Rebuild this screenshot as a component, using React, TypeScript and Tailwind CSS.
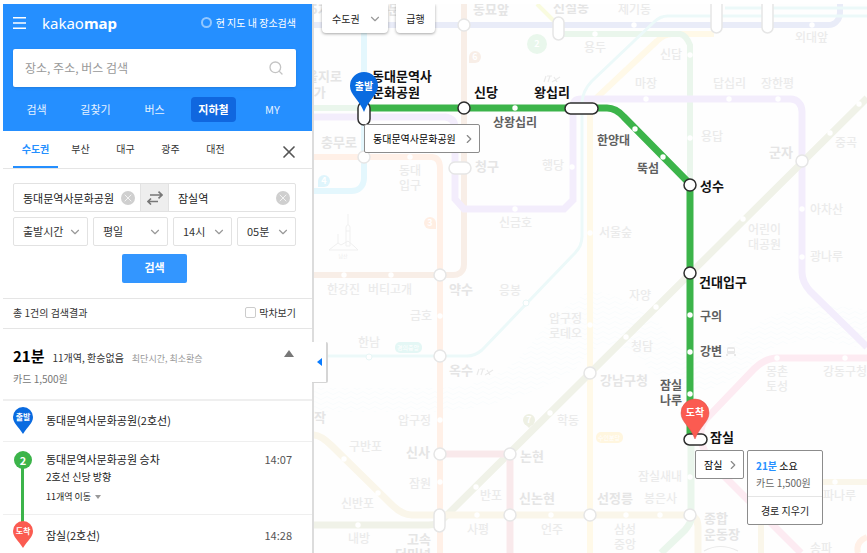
import React, { useState } from 'react';
import { ChevronDown, ChevronRight, Search, X } from 'lucide-react';

type Point = [number, number];

interface StationLabel {
  text: string;
  x: number;
  y: number;
  major?: boolean;
}

const mainTabs = ['검색', '길찾기', '버스', '지하철', 'MY'];
const regions = ['수도권', '부산', '대구', '광주', '대전'];

const timeFilters = [
  { id: 'type', label: '시간 기준', value: '출발시간', className: 'flex-[75]' },
  { id: 'day', label: '요일', value: '평일', className: 'flex-[75]' },
  { id: 'hour', label: '시', value: '14시', className: 'flex-[59]' },
  { id: 'minute', label: '분', value: '05분', className: 'flex-[59]' }
];

// Background lines, drawn in order
const lines = [
  { d: 'M364 4V178Q364 184 360 188Q357 191 351 191H312', color: '#e4f7fd', width: 6 },
  { d: 'M537 4L555 22', color: '#f9fbdf', width: 4 },
  { d: 'M312 25H828Q834 25 837 21Q840 18 840 12V4', color: '#e9ecf8', width: 6 },
  { d: 'M590 553V104L657 41Q664 34 672 34H714', color: '#fff9e8', width: 6 },
  { d: 'M558 34H680Q686 35 690 45V185', color: '#eaf6ec', width: 6 },
  { d: 'M312 108H364', color: '#eaf6ec', width: 6 },
  { d: 'M464 4V264Q464 270 460 273Q457 275 453 275H312', color: '#f8eee7', width: 6 },
  { d: 'M312 157H432Q440 158 440 168V553', color: '#fff0e7', width: 6 },
  { d: 'M312 117H445Q455 118 455 128V199L464 209H564L573 200V107Q573 99 581 99H790Q796 99 799 103Q802 106 802 112V272Q802 282 810 291L867 347', color: '#f3edfc', width: 7 },
  { d: 'M867 16H668Q660 16 654 22L592 81Q582 91 582 104V236Q582 246 575 253L482 350Q475 356 467 356H312', color: '#ecf9f9', width: 3 },
  { d: 'M725 8H867', color: '#ecf9f9', width: 3 },
  { d: 'M867 98L443 519Q439 525 428 525H312', color: '#f0f2e8', width: 7 },
  { d: 'M312 435Q320 434 332 446L391 504Q402 515 412 515H686Q698 515 698 527V553', color: '#faf6ea', width: 7 },
  { d: 'M761 553V482H867', color: '#faf6ea', width: 6 },
  { d: 'M440 454H510V553', color: '#f9e9eb', width: 7 },
  { d: 'M867 358H778Q765 358 754 369L706 419Q700 426 701 437Q702 453 716 468L801 553', color: '#fdebf2', width: 7 },
  { d: 'M691 440V520Q690 524 685 530L661 553', color: '#eaf6ec', width: 7 },
  { d: 'M858 553Q855 542 867 537', color: '#fff0e7', width: 6 }
];

const stops: Point[] = [
  [410, 157], [572, 167], [515, 209], [344, 275], [391, 275], [440, 316], [440, 420], [440, 482],
  [595, 34], [634, 25], [812, 25], [690, 55], [690, 138], [646, 99], [729, 99], [778, 99],
  [830, 133], [859, 104], [743, 219], [802, 209], [802, 257], [656, 307], [626, 337], [590, 233],
  [590, 325], [344, 459], [378, 493], [358, 525], [477, 515], [551, 515], [626, 515], [660, 515],
  [550, 413], [476, 487], [690, 477], [777, 358], [845, 358], [835, 482]
];

const thinStops: Point[] = [[526, 303], [369, 357]];

const transfers: Point[] = [
  [464, 25], [364, 157], [440, 275], [440, 356], [440, 454], [510, 454], [510, 515],
  [590, 515], [590, 373], [690, 515], [802, 161]
];

const labels: StationLabel[] = [
  { text: '5가', x: 310, y: 10, major: true },
  { text: '동대문', x: 364, y: 10, major: true },
  { text: '동묘앞', x: 473, y: 10, major: true },
  { text: '신설동', x: 553, y: 8, major: true },
  { text: '제기동', x: 618, y: 10 },
  { text: '외대앞', x: 795, y: 38 },
  { text: '용두', x: 584, y: 48 },
  { text: '신답', x: 660, y: 55 },
  { text: '마장', x: 635, y: 84 },
  { text: '답십리', x: 713, y: 84 },
  { text: '장한평', x: 761, y: 84 },
  { text: '용답', x: 701, y: 137 },
  { text: '군자', x: 769, y: 153, major: true },
  { text: '중곡', x: 835, y: 143 },
  { text: '을지로', x: 306, y: 77, major: true },
  { text: '4가', x: 306, y: 93, major: true },
  { text: '충무로', x: 321, y: 143, major: true },
  { text: '동대', x: 399, y: 171 },
  { text: '입구', x: 399, y: 186 },
  { text: '청구', x: 475, y: 167, major: true },
  { text: '행당', x: 542, y: 166 },
  { text: '신금호', x: 499, y: 223 },
  { text: '한강진', x: 327, y: 290 },
  { text: '버티고개', x: 368, y: 290 },
  { text: '약수', x: 449, y: 290, major: true },
  { text: '금호', x: 410, y: 316 },
  { text: '한남', x: 358, y: 343 },
  { text: '응봉', x: 499, y: 291 },
  { text: '압구정', x: 549, y: 319 },
  { text: '로데오', x: 549, y: 334 },
  { text: '옥수', x: 449, y: 371, major: true },
  { text: '서울숲', x: 599, y: 233 },
  { text: '어린이', x: 748, y: 230 },
  { text: '대공원', x: 748, y: 245 },
  { text: '아차산', x: 810, y: 210 },
  { text: '광나루', x: 810, y: 257 },
  { text: '자양', x: 629, y: 296 },
  { text: '청담', x: 631, y: 347 },
  { text: '몽촌', x: 766, y: 372 },
  { text: '토성', x: 766, y: 387 },
  { text: '강동구청', x: 823, y: 372 },
  { text: '강남구청', x: 600, y: 381, major: true },
  { text: '동작', x: 302, y: 418, major: true },
  { text: '구반포', x: 349, y: 447 },
  { text: '압구정', x: 398, y: 421 },
  { text: '신사', x: 406, y: 453, major: true },
  { text: '학동', x: 557, y: 421 },
  { text: '논현', x: 520, y: 457, major: true },
  { text: '잠원', x: 409, y: 484 },
  { text: '반포', x: 480, y: 496 },
  { text: '신논현', x: 519, y: 499, major: true },
  { text: '신반포', x: 341, y: 504 },
  { text: '내방', x: 348, y: 539 },
  { text: '고속', x: 407, y: 540, major: true },
  { text: '터미널', x: 395, y: 555, major: true },
  { text: '사평', x: 467, y: 530 },
  { text: '언주', x: 541, y: 530 },
  { text: '잠실새내', x: 638, y: 477 },
  { text: '선정릉', x: 597, y: 499, major: true },
  { text: '봉은사', x: 644, y: 499 },
  { text: '삼성', x: 614, y: 530 },
  { text: '중앙', x: 614, y: 545 },
  { text: '종합', x: 704, y: 519, major: true },
  { text: '운동장', x: 704, y: 535, major: true },
  { text: '송파', x: 810, y: 549 },
  { text: '송파나루', x: 812, y: 496 }
];

const routeStops: Point[] = [[515, 108], [635, 129], [663, 157], [690, 315], [690, 352], [690, 394]];
const routeTransfers: Point[] = [[464, 108], [690, 185], [690, 273]];

const routeLabels: StationLabel[] = [
  { text: '동대문역사', x: 372, y: 77, major: true },
  { text: '문화공원', x: 372, y: 93, major: true },
  { text: '신당', x: 474, y: 93, major: true },
  { text: '왕십리', x: 534, y: 93, major: true },
  { text: '상왕십리', x: 493, y: 123 },
  { text: '한양대', x: 597, y: 141 },
  { text: '뚝섬', x: 637, y: 169 },
  { text: '성수', x: 700, y: 187, major: true },
  { text: '건대입구', x: 699, y: 283, major: true },
  { text: '구의', x: 700, y: 317 },
  { text: '강변', x: 700, y: 352 },
  { text: '잠실', x: 660, y: 386 },
  { text: '나루', x: 660, y: 401 },
  { text: '잠실', x: 710, y: 438, major: true }
];

const lineBadges = [
  { text: '2', x: 537, y: 44, r: 10, color: '#e9f7ec' },
  { text: '6', x: 475, y: 57, r: 6, color: '#f8eee7' },
  { text: '4', x: 324, y: 181, r: 6, color: '#dff5fc' },
  { text: '3', x: 430, y: 223, r: 6, color: '#ffeee3' },
  { text: '7', x: 529, y: 420, r: 6, color: '#eef0e3' }
];

const Pin: React.FC<{ text: string; color: string }> = ({ text, color }) => (
  <svg width="20" height="27" viewBox="0 0 20 27" className="shrink-0">
    <path d="M10 0a10 10 0 0 1 10 10c0 6-5 9-10 17C5 19 0 16 0 10A10 10 0 0 1 10 0z" fill={color} />
    <text x="10" y="13" textAnchor="middle" fontSize="8" fontWeight="700" fill="#fff">{text}</text>
  </svg>
);

const SubwayMap: React.FC = () => (
  <svg className="absolute inset-0 h-full w-full" role="img" aria-label="수도권 노선도">
    <defs>
      <pattern id="waves" width="12" height="5" patternUnits="userSpaceOnUse">
        <path d="M0 3Q3 0 6 3T12 3" fill="none" stroke="#f9fcfd" strokeWidth="1" />
      </pattern>
    </defs>
    <g transform="translate(-314 -4)">
      {/* Han river */}
      <path d="M312 388H440Q500 385 530 345Q560 305 592 290Q640 300 665 330Q690 375 740 335Q790 295 867 310V350Q800 330 760 355Q700 420 650 370Q610 320 575 370Q520 405 440 412H312Z" fill="url(#waves)" />

      {lines.map((line) => (
        <path key={line.d} d={line.d} fill="none" stroke={line.color} strokeWidth={line.width} />
      ))}
      {stops.map(([x, y]) => (
        <circle key={`${x}-${y}`} cx={x} cy={y} r="2.7" fill="#fff" />
      ))}
      {thinStops.map(([x, y]) => (
        <circle key={`${x}-${y}`} cx={x} cy={y} r="3" fill="#fff" stroke="#e8f6f6" />
      ))}
      <g fill="#fff" stroke="#e6e6e6" strokeWidth="1.5">
        {transfers.map(([x, y]) => (
          <circle key={`${x}-${y}`} cx={x} cy={y} r="6" />
        ))}
        <rect x="553" y="17" width="11" height="23" rx="5.5" />
        <rect x="711" y="-5" width="11" height="38" rx="5.5" />
        <rect x="762" y="-5" width="11" height="38" rx="5.5" />
        <rect x="449" y="162" width="22" height="12" rx="6" />
        <rect x="434" y="509" width="11" height="23" rx="5.5" />
      </g>

      {/* Line badges */}
      {lineBadges.map((badge) => (
        <g key={badge.text}>
          <circle cx={badge.x} cy={badge.y} r={badge.r} fill={badge.color} />
          {badge.text === '7' && <path d="M524 423L529 428L534 423Z" fill={badge.color} />}
          {badge.text === '3' && <path d="M430 223H436V229H430Z" fill={badge.color} />}
          {(badge.text === '6' || badge.text === '4') && (
            <rect x={badge.x - 6} y={badge.y} width="6" height="6" fill={badge.color} />
          )}
          <text x={badge.x} y={badge.y + 3} textAnchor="middle" fontSize="9" fontWeight="700" fill="#fff">{badge.text}</text>
        </g>
      ))}
      <rect x="395" y="342" width="27" height="11" rx="5" fill="#e4f7f5" />
      <text x="408" y="350" textAnchor="middle" fontSize="6" fill="#fff">경의중앙</text>
      <rect x="596" y="432" width="27" height="11" rx="5" fill="#fff6df" />
      <text x="609" y="440" textAnchor="middle" fontSize="6" fill="#fff">수인분당</text>

      {/* Namsan tower */}
      <g fill="none" stroke="#f0f0f0">
        <path d="M348 214V224M346 227Q348 222 350 227V231H346ZM346 231V246H350V231M338 234V243" />
        <path d="M329 250Q334 246 338 243L341 245L348 241L355 247L358 250Z" />
      </g>
      <text x="343" y="258" textAnchor="middle" fontSize="5" fill="#ebebeb">남산</text>
      <g fill="none" stroke="#eaeaea" strokeWidth="1.2">
        <path d="M546 76L544 82M547 76H552M550 76L548 82M554 77L557 82M560 77L552 82" />
        <path d="M479 369L477 375M480 369H485M483 369L481 375M487 370L490 375M493 370L485 375" />
        <path d="M704 551Q720 542 738 551" />
      </g>

      <g fontWeight="500">
        {labels.map(({ text, x, y, major }) => (
          <text
            key={`${text}-${x}-${y}`}
            x={x}
            y={y + 4}
            fontSize={major ? 13 : 12}
            fontWeight={major ? 700 : 500}
            fill={major ? '#e5e5e5' : '#ebebeb'}
          >
            {text}
          </text>
        ))}
      </g>

      {/* Bus terminal mark */}
      <g fill="#e9e9e9">
        <rect x="727" y="347" width="8" height="7" rx="1.5" />
        <rect x="726" y="354" width="2" height="2" />
        <rect x="734" y="354" width="2" height="2" />
        <rect x="728" y="349" width="6" height="2" fill="#fff" />
      </g>

      {/* Selected route */}
      <path d="M364 108H607Q616 108 624 117L690 184V440" fill="none" stroke="#3cb44a" strokeWidth="7" />
      {routeStops.map(([x, y]) => (
        <circle key={`${x}-${y}`} cx={x} cy={y} r="2.7" fill="#fff" />
      ))}
      <g fill="#fff" stroke="#2e2e2e" strokeWidth="1.5">
        {routeTransfers.map(([x, y]) => (
          <circle key={`${x}-${y}`} cx={x} cy={y} r="6" />
        ))}
        <rect x="358" y="102" width="12" height="23" rx="6" />
        <rect x="565" y="103" width="33" height="11" rx="5.5" />
        <rect x="684" y="434" width="23" height="11" rx="5.5" />
      </g>
      {routeLabels.map(({ text, x, y, major }) => (
        <text
          key={`${text}-${x}-${y}`}
          x={x}
          y={y + 4}
          fontSize={major ? 13 : 12}
          fontWeight="700"
          fill={major ? '#111' : '#606060'}
        >
          {text}
        </text>
      ))}

      {/* Departure and arrival pins */}
      <path d="M364 72a14 14 0 0 1 14 14c0 9-9 13-14 26c-5-13-14-17-14-26A14 14 0 0 1 364 72z" fill="#0a6be0" />
      <text x="364" y="90" textAnchor="middle" fontSize="10" fontWeight="700" fill="#fff">출발</text>
      <path d="M695 399a14 14 0 0 1 14 14c0 9-9 13-14 26c-5-13-14-17-14-26A14 14 0 0 1 695 399z" fill="#fb5b51" stroke="#d9534a" strokeWidth=".5" />
      <text x="695" y="416" textAnchor="middle" fontSize="10" fontWeight="700" fill="#fff">도착</text>
    </g>
  </svg>
);

const App: React.FC = () => {
  const [activeTab, setActiveTab] = useState('지하철');
  const [region, setRegion] = useState('수도권');

  return (
    <div className="flex h-screen overflow-hidden bg-white pt-1 pl-[3px] font-['Noto_Sans_CJK_KR','Noto_Sans',sans-serif] text-[11px] leading-4 text-[#333]">
      <aside className="relative z-10 flex w-[311px] shrink-0 flex-col border-r-2 border-[#dcdcdc] bg-white">
        {/* Header */}
        <header className="h-[127px] shrink-0 bg-[#258fff] text-white">
          <div className="flex h-[45px] items-center pr-4 pb-2 pl-[10px]">
            <button aria-label="메뉴">
              <svg width="13" height="12" viewBox="0 0 13 12" fill="#fff">
                <path d="M0 0H13V1.5H0ZM0 5.2H13V6.7H0ZM0 10.5H13V12H0Z" />
              </svg>
            </button>
            <h1 className="ml-4 font-['Noto_Sans'] text-[15px] leading-5">
              kakao<span className="font-bold">map</span>
            </h1>
            <button className="ml-auto flex items-center gap-1 text-[10px]">
              <span className="h-[11px] w-[11px] rounded-full border-2 border-[#92c7ff]" />
              현 지도 내 장소검색
            </button>
          </div>
          <div className="mr-4 ml-[10px] flex h-[38px] items-center rounded-xs bg-white px-3 shadow-sm">
            <input
              aria-label="장소, 주소, 버스 검색"
              placeholder="장소, 주소, 버스 검색"
              className="min-w-0 flex-1 text-[12px] text-[#333] outline-none placeholder:text-[#999]"
            />
            <button aria-label="검색">
              <Search className="h-4 w-4 text-[#c4c4c4]" strokeWidth={2} />
            </button>
          </div>
          <nav className="flex px-1 pt-[10px]">
            {mainTabs.map((tab) => (
              <button key={tab} onClick={() => setActiveTab(tab)} className="flex w-[59px] justify-center">
                <span
                  className={`flex h-[25px] w-[45px] items-center justify-center rounded-sm pb-[2px] ${
                    activeTab === tab ? 'bg-[#1067df] font-bold' : 'text-[#e6f2ff]'
                  }`}
                >
                  {tab}
                </span>
              </button>
            ))}
          </nav>
        </header>

        {/* Region tabs */}
        <div className="flex h-[38px] shrink-0 border-b border-[#e5e5e5] pr-[13px] pl-[10px] text-[10px]">
          {regions.map((name) => (
            <button
              key={name}
              onClick={() => setRegion(name)}
              className={`w-[45px] border-b-2 ${
                region === name ? 'border-[#258fff] font-bold text-[#258fff]' : 'border-transparent'
              }`}
            >
              {name}
            </button>
          ))}
          <button aria-label="닫기" className="mt-1 ml-auto">
            <X className="h-5 w-5 text-[#555]" strokeWidth={2} />
          </button>
        </div>

        {/* Search form */}
        <form className="shrink-0 border-b border-[#e5e5e5] pt-[14px] pr-4 pb-[15px] pl-[10px]" onSubmit={(e) => e.preventDefault()}>
          <div className="flex h-[29px] rounded-xs border border-[#e2e2e2]">
            <div className="flex w-[126px] shrink-0 items-center pr-[5px] pl-[9px]">
              <input aria-label="출발역" defaultValue="동대문역사문화공원" className="min-w-0 flex-1 text-[#222] outline-none" />
              <button type="button" aria-label="출발역 지우기" className="flex h-[14px] w-[14px] shrink-0 items-center justify-center rounded-full bg-[#cfcfcf]">
                <X className="h-3 w-3 text-white" strokeWidth={1.5} />
              </button>
            </div>
            <button type="button" aria-label="출발 도착 바꾸기" className="flex w-[29px] shrink-0 items-center justify-center border-x border-[#e2e2e2] bg-[#eee]">
              <svg width="16" height="14" viewBox="0 0 16 14" fill="none" stroke="#777" strokeWidth="1.6">
                <path d="M3 4H15M11.5 0.7L15 4L11.5 7.3M11 10.5H1M4 7.5L1 10.5L4 13.5" />
              </svg>
            </button>
            <div className="flex min-w-0 flex-1 items-center pr-[5px] pl-[9px]">
              <input aria-label="도착역" defaultValue="잠실역" className="min-w-0 flex-1 text-[#222] outline-none" />
              <button type="button" aria-label="도착역 지우기" className="flex h-[14px] w-[14px] shrink-0 items-center justify-center rounded-full bg-[#cfcfcf]">
                <X className="h-3 w-3 text-white" strokeWidth={1.5} />
              </button>
            </div>
          </div>
          <div className="mt-[5px] flex gap-[5px]">
            {timeFilters.map((filter) => (
              <div key={filter.id} className={`relative min-w-0 ${filter.className}`}>
                <select
                  aria-label={filter.label}
                  className="h-[29px] w-full appearance-none rounded-xs border border-[#e2e2e2] bg-white pb-[2px] pl-[9px] text-[11px] outline-none"
                >
                  <option>{filter.value}</option>
                </select>
                <ChevronDown className="pointer-events-none absolute top-2 right-[6px] h-[14px] w-[14px] text-[#999]" strokeWidth={2} />
              </div>
            ))}
          </div>
          <button type="submit" className="mx-auto mt-2 block h-[29px] w-[65px] rounded-xs bg-[#3396ff] pb-1 font-bold text-white">
            검색
          </button>
        </form>

        <div className="flex h-[30px] shrink-0 items-center justify-between border-b border-[#e5e5e5] pr-4 pb-[2px] pl-[10px] text-[10px]">
          <p>총 1건의 검색결과</p>
          <label className="flex items-center gap-[3px]">
            <input type="checkbox" className="h-[11px] w-[11px] appearance-none rounded-xs border border-[#ccc]" />
            막차보기
          </label>
        </div>

        {/* Route summary */}
        <section className="h-[72px] shrink-0 border-b-2 border-[#efefef] pt-[17px] pr-[18px] pl-[10px]">
          <div className="flex items-baseline">
            <h2 className="text-[15px] leading-5 font-bold text-black">21분</h2>
            <p className="ml-2 text-[10px]">11개역, 환승없음</p>
            <p className="ml-2 text-[9px] text-[#999]">최단시간, 최소환승</p>
            <button aria-label="접기" className="mt-1 ml-auto self-start">
              <svg width="10" height="7" viewBox="0 0 10 7" fill="#777">
                <path d="M5 0L10 7H0Z" />
              </svg>
            </button>
          </div>
          <p className="mt-1 text-[10px] text-[#777]">카드 1,500원</p>
        </section>

        {/* Route steps */}
        <ol className="text-[#222]">
          <li className="flex h-[41px] items-center border-b border-[#efefef] pb-[2px] pl-[10px]">
            <Pin text="출발" color="#0a6be0" />
            <span className="ml-[13px]">동대문역사문화공원(2호선)</span>
          </li>
          <li className="relative flex h-[73px] border-b border-[#efefef] pt-[9px] pr-5 pl-[10px]">
            <div className="absolute top-[18px] -bottom-3 left-[18px] w-[3px] bg-[#3cb44a]" />
            <span className="relative mx-px h-[18px] w-[18px] rounded-full bg-[#3cb44a] text-center leading-[18px] font-bold text-white">
              2
            </span>
            <div className="ml-[13px] flex-1">
              <p>동대문역사문화공원 승차</p>
              <p className="mt-[2px] text-[10px] leading-4">2호선 신당 방향</p>
              <button className="mt-1 flex items-center gap-1 text-[9px]">
                11개역 이동
                <svg width="6" height="4" viewBox="0 0 6 4" fill="#999">
                  <path d="M0 0H6L3 4Z" />
                </svg>
              </button>
            </div>
            <time className="text-[#555]">14:07</time>
          </li>
          <li className="relative flex h-[41px] items-center pr-5 pb-[2px] pl-[10px]">
            <Pin text="도착" color="#fb5b51" />
            <span className="ml-[13px] flex-1">잠실(2호선)</span>
            <time className="text-[#555]">14:28</time>
          </li>
        </ol>

        {/* Collapse handle */}
        <button
          aria-label="패널 접기"
          className="absolute top-[338px] -right-4 flex h-[41px] w-4 items-center rounded-r-xs border-r-2 border-b border-[#d5d5d5] bg-white pl-[5px]"
        >
          <svg width="5" height="8" viewBox="0 0 5 8" fill="#0a7cff">
            <path d="M5 0V8L0 4Z" />
          </svg>
        </button>
      </aside>

      <main className="relative min-w-0 flex-1 overflow-hidden bg-[#fefefe]">
        <SubwayMap />

        <div className="absolute top-0 left-2 flex gap-2 text-[10px] text-[#222]">
          <button className="flex h-[29px] w-[66px] items-center justify-between rounded-b-sm bg-white pr-[6px] pl-[10px] shadow-[0_1px_3px_rgba(0,0,0,0.35)]">
            수도권
            <ChevronDown className="h-[14px] w-[14px] text-[#999]" />
          </button>
          <button className="h-[29px] w-[39px] rounded-b-sm bg-white shadow-[0_1px_3px_rgba(0,0,0,0.35)]">급행</button>
        </div>

        {/* Station balloons */}
        <button className="absolute top-[120px] left-[50px] flex h-[29px] w-[116px] items-center justify-between rounded-xs border border-[#8c8c8c] bg-white pr-[3px] pl-2 text-[10px] text-black">
          동대문역사문화공원
          <ChevronRight className="h-[14px] w-[14px] text-[#888]" />
        </button>
        <button className="absolute top-[446px] left-[381px] flex h-[29px] w-[49px] items-center justify-between rounded-xs border border-[#8c8c8c] bg-white pr-[3px] pl-2 text-[10px] text-black">
          잠실
          <ChevronRight className="h-[14px] w-[14px] text-[#888]" />
        </button>
        <div className="absolute top-[446px] left-[433px] w-[76px] rounded-xs border border-[#8c8c8c] bg-white">
          <div className="px-2 pt-[6px] pb-[5px] text-[10px]">
            <p className="leading-[17px] text-black">
              <strong className="text-[#258fff]">21분</strong> 소요
            </p>
            <p className="leading-[17px] text-[#666]">카드 1,500원</p>
          </div>
          <button className="h-7 w-full border-t border-[#e5e5e5] text-[10px] text-[#222]">경로 지우기</button>
        </div>
      </main>
    </div>
  );
};

export default App;
